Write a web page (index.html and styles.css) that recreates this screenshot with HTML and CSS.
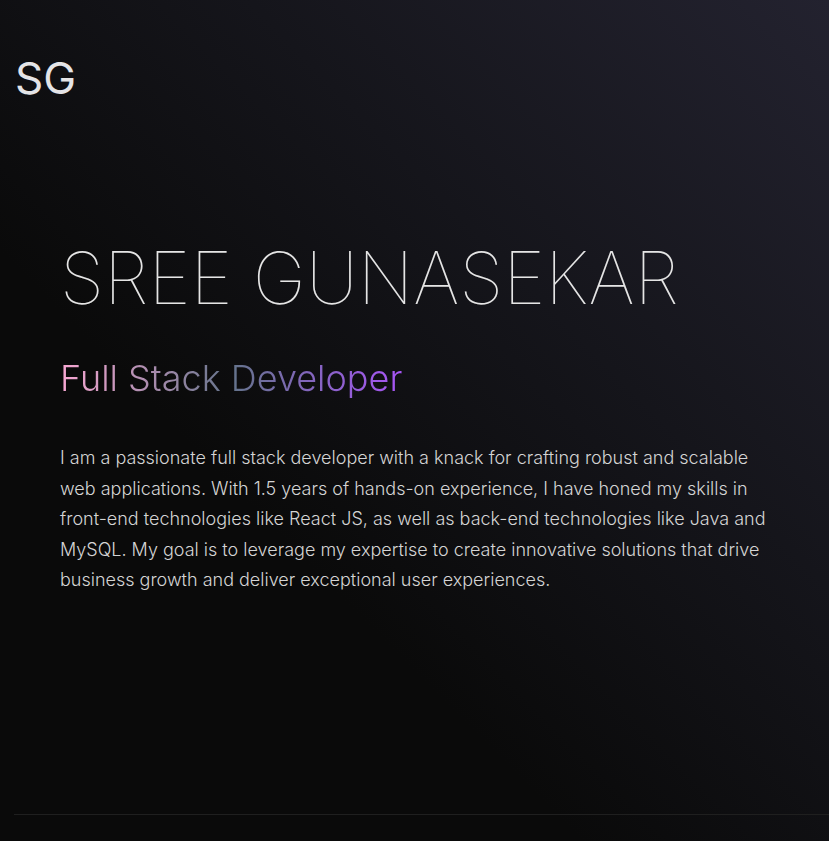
FILE: index.html
```html
<!DOCTYPE html>
<html lang="en">
<head>
<meta charset="utf-8">
<title>Sree Gunasekar</title>
<link rel="stylesheet" href="styles.css">
</head>
<body>
<div class="page">
  <header class="nav">
    <div class="logo">SG</div>
  </header>
  <main class="hero">
    <h1 class="name">SREE GUNASEKAR</h1>
    <h2 class="role">Full Stack Developer</h2>
    <p class="bio">I am a passionate full stack developer with a knack for crafting robust and scalable web applications. With 1.5 years of hands-on experience, I have honed my skills in front-end technologies like React JS, as well as back-end technologies like Java and MySQL. My goal is to leverage my expertise to create innovative solutions that drive business growth and deliver exceptional user experiences.</p>
  </main>
  <div class="divider"></div>
</div>
</body>
</html>
```
FILE: styles.css
```css
html, body {
  margin: 0;
  padding: 0;
  background: #0a0a0a;
}
.page {
  min-height: 841px;
  background: linear-gradient(to bottom left, #23222f 0%, #15151b 35%, #0a0a0a 65%);
  font-family: Inter, "Noto Sans", sans-serif;
  color: #e5e5e5;
  display: flex;
  flex-direction: column;
}
.nav {
  padding: 52px 15px 0;
}
.logo {
  font-size: 44px;
  font-weight: 400;
  line-height: 52px;
  color: #e4e4e7;
}
.hero {
  padding: 131px 60px 0;
  flex: 1;
}
.name {
  margin: 0;
  font-size: 72px;
  font-weight: 100;
  line-height: 86px;
  color: #e5e5e5;
  letter-spacing: 0;
}
.role {
  margin: 32px 0 0;
  font-size: 36px;
  font-weight: 300;
  line-height: 50px;
  background: linear-gradient(to right, #f9a8d4, #64748b, #a855f7);
  -webkit-background-clip: text;
  background-clip: text;
  color: transparent;
  display: inline-block;
}
.bio {
  margin: 40px 0 0;
  max-width: 720px;
  font-size: 18px;
  font-weight: 300;
  line-height: 30.5px;
  color: #d4d4d4;
}
.divider {
  margin: 0 0 26px 14px;
  height: 1px;
  background: #1f1f1f;
}
```
